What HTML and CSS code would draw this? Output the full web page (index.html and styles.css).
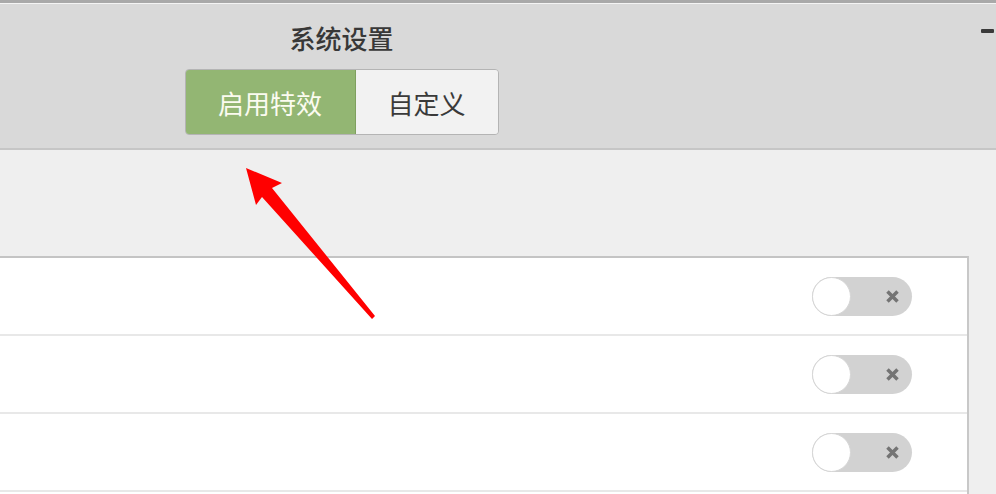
FILE: index.html
```html
<!DOCTYPE html>
<html lang="zh-CN">
<head>
    <meta charset="UTF-8">
    <meta name="viewport" content="width=device-width, initial-scale=1.0">
    <title>系统设置</title>
    <link rel="stylesheet" href="styles.css">
</head>
<body>
    <div class="topline"></div>
    <header class="header">
        <div class="header-center">
            <h1 class="title">系统设置</h1>
            <div class="segmented">
                <button class="seg active">启用特效</button>
                <button class="seg">自定义</button>
            </div>
        </div>
        <span class="minimize"></span>
    </header>

    <main class="content">
        <section class="card">
            <div class="row">
                <span class="toggle">
                    <span class="knob"></span>
                    <svg class="cross" viewBox="0 0 12 12"><path d="M2 2L10 10M10 2L2 10"/></svg>
                </span>
            </div>
            <div class="row">
                <span class="toggle">
                    <span class="knob"></span>
                    <svg class="cross" viewBox="0 0 12 12"><path d="M2 2L10 10M10 2L2 10"/></svg>
                </span>
            </div>
            <div class="row">
                <span class="toggle">
                    <span class="knob"></span>
                    <svg class="cross" viewBox="0 0 12 12"><path d="M2 2L10 10M10 2L2 10"/></svg>
                </span>
            </div>
            <div class="row row-last"></div>
        </section>
    </main>

    <!-- 红色箭头标注 -->
    <svg class="arrow" width="996" height="494" viewBox="0 0 996 494">
        <polygon points="246,168 282,183 272,188 375,316 372,319 262,197 256,205" fill="#ff0000"/>
    </svg>
</body>
</html>
```

FILE: styles.css
```css
html {
    overflow: hidden;
}

body {
    margin: 0;
    padding: 0;
    height: 494px;
    overflow: hidden;
    background-color: #efefef;
    font-family: "Noto Sans CJK SC", "Noto Sans", sans-serif;
    position: relative;
}

.topline {
    height: 3px;
    background-color: #a9a9a9;
    border-bottom: 1px solid #f4f4f4;
}

.header {
    display: flex;
    height: 144px;
    background-color: #d9d9d9;
    border-bottom: 2px solid #c6c6c6;
}

.header-center {
    width: 683px;
    display: flex;
    flex-direction: column;
    align-items: center;
}

.title {
    margin: 16px 0 0;
    height: 49px;
    font-size: 26px;
    line-height: 36px;
    font-weight: 500;
    color: #383838;
}

.segmented {
    display: flex;
    height: 66px;
    border-radius: 4px;
    overflow: hidden;
    border: 1px solid #b4b4b4;
    box-sizing: border-box;
}

.seg {
    border: none;
    margin: 0;
    padding: 0;
    font-family: inherit;
    font-size: 26px;
    color: #3a3a3a;
    background-color: #f2f2f2;
    width: 142px;
}

.seg.active {
    width: 170px;
    background-color: #93b673;
    color: #fbfbf0;
    border-right: 1px solid #7fa05f;
}

.minimize {
    margin: 25px 2px 0 auto;
    width: 13px;
    height: 4px;
    border-radius: 1px;
    background-color: #3a3a3a;
}

.content {
    padding-top: 106px;
}

.card {
    width: 967px;
    background-color: #fff;
    border-top: 2px solid #c4c4c4;
    border-right: 2px solid #c8c8c8;
}

.row {
    height: 76px;
    display: flex;
    align-items: center;
    justify-content: flex-end;
    padding-right: 55px;
    border-bottom: 2px solid #e8e8e8;
}

.row-last {
    height: 2px;
    border-bottom: none;
}

.toggle {
    position: relative;
    width: 100px;
    height: 39px;
    border-radius: 20px;
    background-color: #d2d2d2;
    display: flex;
    align-items: center;
    justify-content: flex-end;
    padding-right: 12px;
    box-sizing: border-box;
}

.knob {
    position: absolute;
    left: 0;
    top: 0;
    width: 39px;
    height: 39px;
    border-radius: 50%;
    background-color: #fff;
    border: 1px solid #d6d6d6;
    box-sizing: border-box;
}

.cross {
    width: 15px;
    height: 15px;
    stroke: #747474;
    stroke-width: 2.8;
    fill: none;
}

.arrow {
    position: absolute;
    left: 0;
    top: 0;
    pointer-events: none;
}
```
